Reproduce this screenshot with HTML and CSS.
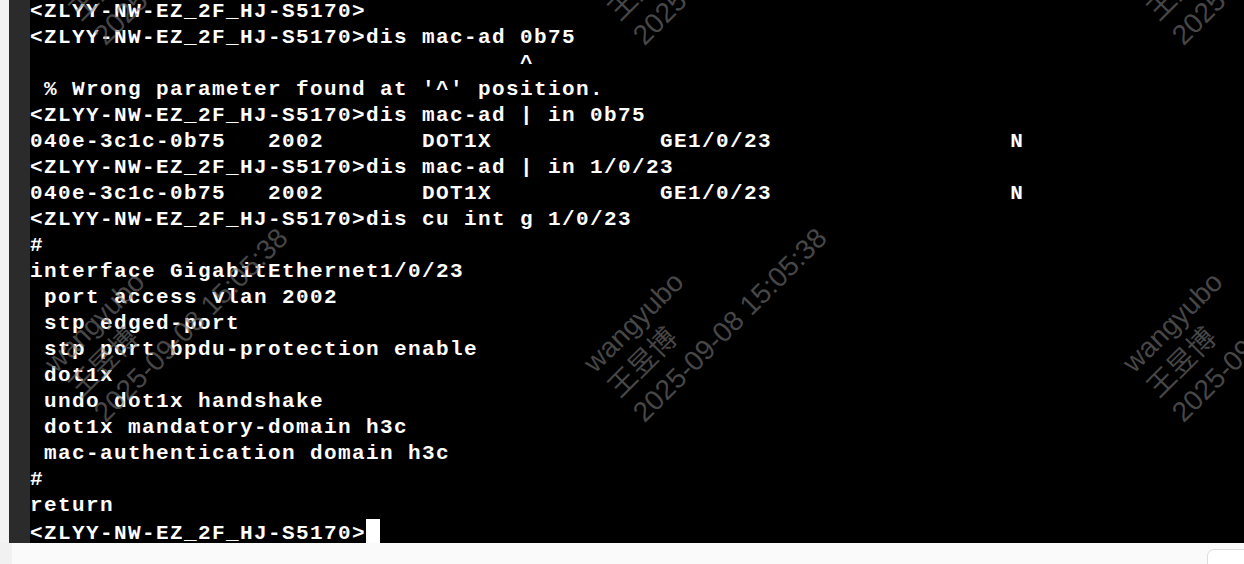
FILE: index.html
```html
<!DOCTYPE html>
<html>
<head>
<meta charset="utf-8">
<link rel="stylesheet" href="styles.css">
</head>
<body>
<div class="page">
  <div class="top">
    <div class="edge-light"></div>
    <div class="edge-dark"></div>
    <div class="terminal">
<pre class="screen">&lt;ZLYY-NW-EZ_2F_HJ-S5170&gt;
&lt;ZLYY-NW-EZ_2F_HJ-S5170&gt;dis mac-ad 0b75
                                   ^
 % Wrong parameter found at '^' position.
&lt;ZLYY-NW-EZ_2F_HJ-S5170&gt;dis mac-ad | in 0b75
040e-3c1c-0b75   2002       DOT1X            GE1/0/23                 N
&lt;ZLYY-NW-EZ_2F_HJ-S5170&gt;dis mac-ad | in 1/0/23
040e-3c1c-0b75   2002       DOT1X            GE1/0/23                 N
&lt;ZLYY-NW-EZ_2F_HJ-S5170&gt;dis cu int g 1/0/23
#
interface GigabitEthernet1/0/23
 port access vlan 2002
 stp edged-port
 stp port bpdu-protection enable
 dot1x
 undo dot1x handshake
 dot1x mandatory-domain h3c
 mac-authentication domain h3c
#
return
&lt;ZLYY-NW-EZ_2F_HJ-S5170&gt;<span class="cursor"></span></pre>
      <div class="watermarks">
        <div class="wm" style="left:7px;top:-22px"><div>wangyubo</div><div>王昱博</div><div>2025-09-08 15:05:38</div></div>
        <div class="wm" style="left:546px;top:-22px"><div>wangyubo</div><div>王昱博</div><div>2025-09-08 15:05:38</div></div>
        <div class="wm" style="left:1085px;top:-22px"><div>wangyubo</div><div>王昱博</div><div>2025-09-08 15:05:38</div></div>
        <div class="wm" style="left:7px;top:355px"><div>wangyubo</div><div>王昱博</div><div>2025-09-08 15:05:38</div></div>
        <div class="wm" style="left:546px;top:355px"><div>wangyubo</div><div>王昱博</div><div>2025-09-08 15:05:38</div></div>
        <div class="wm" style="left:1085px;top:355px"><div>wangyubo</div><div>王昱博</div><div>2025-09-08 15:05:38</div></div>
      </div>
    </div>
  </div>
  <div class="bottom">
    <div class="bottom-edge"></div>
    <div class="bottom-main">
      <div class="corner-box"></div>
    </div>
  </div>
</div>
</body>
</html>
```

FILE: styles.css
```css
html, body {
  margin: 0;
  padding: 0;
  background: #fafafa;
}

.page {
  width: 1244px;
  height: 564px;
  display: flex;
  flex-direction: column;
  overflow: hidden;
}

.top {
  height: 543px;
  display: flex;
  flex: none;
}

.edge-light {
  width: 9px;
  background: #f3f3f3;
}

.edge-dark {
  width: 21px;
  background: #2b2b2b;
}

.terminal {
  flex: 1;
  background: #000;
  position: relative;
  overflow: hidden;
}

.screen {
  margin: -1.5px 0 0 0;
  padding: 0;
  color: #ffffff;
  font-family: "Liberation Mono", "DejaVu Sans Mono", monospace;
  font-weight: bold;
  font-size: 21px;
  letter-spacing: 1.4px;
  line-height: 26px;
  white-space: pre;
}

.cursor {
  display: inline-block;
  width: 14px;
  height: 26px;
  background: #ffffff;
  vertical-align: -6px;
}

.watermarks {
  position: absolute;
  inset: 0;
  pointer-events: none;
}

.wm {
  position: absolute;
  transform: rotate(-45deg);
  transform-origin: 0 0;
  font-family: "Liberation Sans", "Noto Sans CJK SC", sans-serif;
  font-size: 28px;
  line-height: 35px;
  color: rgba(120, 120, 120, 0.6);
  white-space: nowrap;
}

.bottom {
  flex: 1;
  display: flex;
}

.bottom-edge {
  width: 12px;
  background: #f1f1f1;
}

.bottom-main {
  flex: 1;
  position: relative;
  background: #fafafa;
}

.corner-box {
  position: absolute;
  left: 1195px;
  top: 6px;
  width: 60px;
  height: 40px;
  background: #ffffff;
  border: 1px solid #dcdcdc;
  border-radius: 7px;
}
```
